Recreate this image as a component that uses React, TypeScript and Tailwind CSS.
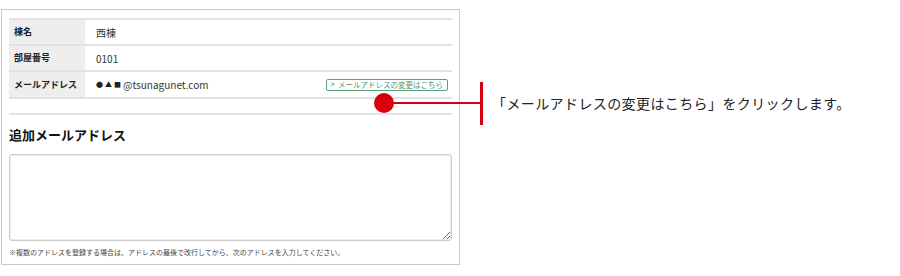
export default function App() {
  const rows = [
    { label: "棟名", value: "西棟" },
    { label: "部屋番号", value: "0101" },
  ];

  return (
    <div
      className="w-[900px] h-[276px] bg-white relative flex text-[#333]"
      style={{ fontFamily: '"Noto Sans CJK JP", "Noto Sans", sans-serif' }}
    >
      <div className="mt-[9px] ml-px w-[459px] h-[256px] border border-[#c8c8c8] px-[7px] pt-[8px]">
        <div className="border-t-2 border-[#e2e2e2]">
          {rows.map((r) => (
            <div key={r.label} className="flex h-[26px] border-b-2 border-[#e2e2e2]">
              <div className="w-[76px] bg-[#eeeeee] pl-[5px] flex items-center text-[9px] font-bold text-[#222]">
                {r.label}
              </div>
              <div className="pl-[11px] flex items-center text-[10px]">{r.value}</div>
            </div>
          ))}
          <div className="flex h-[27px] border-b-2 border-[#e2e2e2]">
            <div className="w-[76px] bg-[#eeeeee] pl-[5px] flex items-center text-[9px] font-bold text-[#222]">
              メールアドレス
            </div>
            <div className="flex-1 pl-[11px] pr-[4px] flex items-center justify-between text-[10px]">
              <span className="flex items-center">
                <span className="text-[7px] text-[#222] tracking-[2px]">●▲■</span>
                <span>@tsunagunet.com</span>
              </span>
              <span className="h-[12px] px-[4px] border border-[#5a9e7a] rounded-[2px] text-[#4f9470] text-[7.5px] leading-[9px] whitespace-nowrap flex items-center gap-[3px]">
                <span className="text-[7px] font-bold">&gt;</span>
                <span>メールアドレスの変更はこちら</span>
              </span>
            </div>
          </div>
        </div>
        <div className="mt-[14px] border-t-2 border-[#e2e2e2]" />
        <h2 className="mt-[11px] text-[13px] font-bold text-[#111] leading-[18px]">
          追加メールアドレス
        </h2>
        <textarea className="mt-[10px] w-[443px] h-[87px] border border-[#cccccc] shadow-[inset_0_0_0_1px_#ececec] rounded-[3px] block" />
        <p className="mt-[6px] text-[7px] text-[#444]">
          ※複数のアドレスを登録する場合は、アドレスの最後で改行してから、次のアドレスを入力してください。
        </p>
      </div>

      <div className="absolute left-[374px] top-[93px] w-[20px] h-[20px] rounded-full bg-[#d7000f]" />
      <div className="absolute left-[390px] top-[102px] w-[92px] h-[2px] bg-[#d7000f]" />
      <div className="absolute left-[480px] top-[82px] w-[3px] h-[43px] bg-[#d7000f]" />
      <div className="absolute left-[492px] top-[93px] text-[14px] tracking-[0.4px] text-[#222] leading-[20px]">
        「メールアドレスの変更はこちら」をクリックします。
      </div>
    </div>
  );
}
